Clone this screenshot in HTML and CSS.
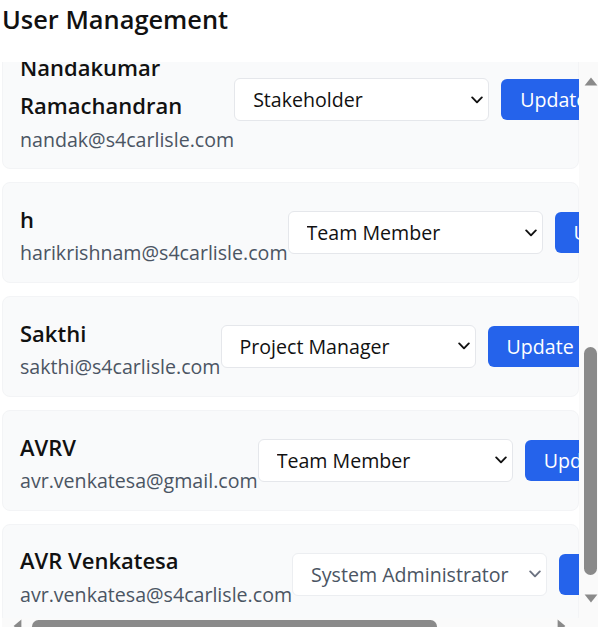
FILE: index.html
```html
<!DOCTYPE html>
<html lang="en">
<head>
<meta charset="utf-8">
<title>User Management</title>
<link rel="stylesheet" href="styles.css">
</head>
<body>
<div class="page">
  <h2 class="title">User Management</h2>
  <div class="panel">
    <div class="list" id="list">
      <div class="card">
        <div class="info"><div class="name">Admin</div><div class="email">admin@s4carlisle.com</div></div>
        <div class="controls"><span class="select-wrap"><select class="role"><option>System Administrator</option></select><svg class="chev" viewBox="0 0 12 8" aria-hidden="true"><path d="M1.2 1.4 L6 6.3 L10.8 1.4"/></svg></span><button class="btn">Update</button></div>
      </div>
      <div class="card">
        <div class="info"><div class="name">Priya S</div><div class="email">priya.s@s4carlisle.com</div></div>
        <div class="controls"><span class="select-wrap"><select class="role"><option>Project Manager</option></select><svg class="chev" viewBox="0 0 12 8" aria-hidden="true"><path d="M1.2 1.4 L6 6.3 L10.8 1.4"/></svg></span><button class="btn">Update</button></div>
      </div>
      <div class="card">
        <div class="info"><div class="name">Karthik</div><div class="email">karthik@s4carlisle.com</div></div>
        <div class="controls"><span class="select-wrap"><select class="role"><option>Team Member</option></select><svg class="chev" viewBox="0 0 12 8" aria-hidden="true"><path d="M1.2 1.4 L6 6.3 L10.8 1.4"/></svg></span><button class="btn">Update</button></div>
      </div>
      <div class="card">
        <div class="info"><div class="name">Lakshmi</div><div class="email">lakshmi@s4carlisle.com</div></div>
        <div class="controls"><span class="select-wrap"><select class="role"><option>Stakeholder</option></select><svg class="chev" viewBox="0 0 12 8" aria-hidden="true"><path d="M1.2 1.4 L6 6.3 L10.8 1.4"/></svg></span><button class="btn">Update</button></div>
      </div>
      <div class="card">
        <div class="info"><div class="name">Nandakumar Ramachandran</div><div class="email">nandak@s4carlisle.com</div></div>
        <div class="controls"><span class="select-wrap"><select class="role"><option>Stakeholder</option></select><svg class="chev" viewBox="0 0 12 8" aria-hidden="true"><path d="M1.2 1.4 L6 6.3 L10.8 1.4"/></svg></span><button class="btn">Update</button></div>
      </div>
      <div class="card" id="anchor">
        <div class="info"><div class="name">h</div><div class="email">harikrishnam@s4carlisle.com</div></div>
        <div class="controls"><span class="select-wrap"><select class="role"><option>Team Member</option></select><svg class="chev" viewBox="0 0 12 8" aria-hidden="true"><path d="M1.2 1.4 L6 6.3 L10.8 1.4"/></svg></span><button class="btn">Update</button></div>
      </div>
      <div class="card">
        <div class="info"><div class="name">Sakthi</div><div class="email">sakthi@s4carlisle.com</div></div>
        <div class="controls"><span class="select-wrap"><select class="role"><option>Project Manager</option></select><svg class="chev" viewBox="0 0 12 8" aria-hidden="true"><path d="M1.2 1.4 L6 6.3 L10.8 1.4"/></svg></span><button class="btn">Update</button></div>
      </div>
      <div class="card">
        <div class="info"><div class="name">AVRV</div><div class="email">avr.venkatesa@gmail.com</div></div>
        <div class="controls"><span class="select-wrap"><select class="role"><option>Team Member</option></select><svg class="chev" viewBox="0 0 12 8" aria-hidden="true"><path d="M1.2 1.4 L6 6.3 L10.8 1.4"/></svg></span><button class="btn">Update</button></div>
      </div>
      <div class="card">
        <div class="info"><div class="name">AVR Venkatesa</div><div class="email">avr.venkatesa@s4carlisle.com</div></div>
        <div class="controls"><span class="select-wrap select-muted"><select class="role"><option>System Administrator</option></select><svg class="chev" viewBox="0 0 12 8" aria-hidden="true"><path d="M1.2 1.4 L6 6.3 L10.8 1.4"/></svg></span><button class="btn">Update</button></div>
      </div>
    </div>
    <div class="vbar" aria-hidden="true">
      <svg class="arrow arrow-up" viewBox="0 0 14 9"><path d="M7 0.6 L13.4 8.4 L0.6 8.4 Z"/></svg>
      <div class="vthumb"></div>
      <svg class="arrow arrow-down" viewBox="0 0 14 9"><path d="M0.6 0.6 L13.4 0.6 L7 8.4 Z"/></svg>
    </div>
    <div class="hbar" aria-hidden="true">
      <svg class="harrow arrow-left" viewBox="0 0 9 14"><path d="M0.6 7 L8.4 0.6 L8.4 13.4 Z"/></svg>
      <div class="hthumb"></div>
      <svg class="harrow arrow-right" viewBox="0 0 9 14"><path d="M8.4 7 L0.6 0.6 L0.6 13.4 Z"/></svg>
    </div>
    <div class="corner" aria-hidden="true"></div>
  </div>
</div>
<script src="script.js"></script>
</body>
</html>
```
FILE: styles.css
```css
html, body {
  margin: 0;
  background: #ffffff;
}
body {
  font-family: "Open Sans", "Noto Sans", sans-serif;
  color: #111827;
}
.page {
  padding: 3px 0 0 2px;
  width: 596px;
}
.title {
  margin: 0 0 27px 0;
  font-size: 25.4px;
  line-height: 32px;
  font-weight: 600;
  color: #111111;
}
.panel {
  position: relative;
  width: 596px;
  height: 571px;
  overflow: hidden;
}
.list {
  width: 577px;
  height: 571px;
  overflow: hidden;
  display: flex;
  flex-direction: column;
  gap: 13px;
  padding-bottom: 30px;
  box-sizing: border-box;
}
.card {
  flex-shrink: 0;
  display: flex;
  align-items: center;
  justify-content: space-between;
  padding: 17.6px 17px;
  border: 1px solid #f3f4f6;
  border-radius: 8px;
  background: #f9fafb;
}
.name {
  font-size: 22px;
  line-height: 37.7px;
  font-weight: 600;
  color: #111111;
}
.email {
  padding-top: 3px;
  font-size: 19.6px;
  line-height: 23px;
  color: #4b5563;
}
.controls {
  flex-shrink: 0;
  display: flex;
  align-items: center;
  gap: 12px;
}
.select-wrap {
  position: relative;
  display: block;
}
.role {
  display: block;
  width: 255px;
  height: 43px;
  padding: 0 24px 0 18px;
  font-family: inherit;
  font-size: 19.6px;
  color: #111111;
  background: #ffffff;
  border: 1px solid #e5e7eb;
  border-radius: 6px;
  appearance: none;
  -webkit-appearance: none;
}
.chev {
  position: absolute;
  right: 6px;
  top: 17.5px;
  width: 12px;
  height: 8px;
  fill: none;
  stroke: #111111;
  stroke-width: 1.9;
  stroke-linecap: round;
  stroke-linejoin: round;
  pointer-events: none;
}
.select-muted .role {
  color: #4b5563;
  border-color: #eceef1;
}
.select-muted .chev {
  stroke: #6b7280;
}
.btn {
  height: 41px;
  padding: 0 19px;
  font-family: inherit;
  font-size: 19.6px;
  font-weight: 500;
  color: #ffffff;
  background: #2563eb;
  border: none;
  border-radius: 6px;
}
.vbar {
  position: absolute;
  left: 577px;
  top: 0;
  width: 19px;
  height: 556px;
  background: #fafafa;
}
.arrow {
  position: absolute;
  left: 4.5px;
  width: 14px;
  height: 9px;
  fill: #8a8a8a;
}
.arrow-up {
  top: 14.5px;
}
.arrow-down {
  top: 531.5px;
}
.vthumb {
  position: absolute;
  left: 4.5px;
  top: 285px;
  width: 13px;
  height: 228px;
  border-radius: 6.5px;
  background: #8a8a8a;
}
.hbar {
  position: absolute;
  left: 0;
  top: 556px;
  width: 577px;
  height: 15px;
  background: #fafafa;
}
.harrow {
  position: absolute;
  top: 1px;
  width: 9px;
  height: 14px;
  fill: #8a8a8a;
}
.arrow-left {
  left: 11.3px;
}
.arrow-right {
  left: 554.7px;
}
.hthumb {
  position: absolute;
  left: 30px;
  top: 1.5px;
  width: 405px;
  height: 13px;
  border-radius: 6.5px;
  background: #8a8a8a;
}
.corner {
  position: absolute;
  left: 577px;
  top: 556px;
  width: 19px;
  height: 15px;
  background: #fafafa;
}
```
FILE: script.js
```js
(function () {
  var list = document.getElementById('list');
  var anchor = document.getElementById('anchor');
  list.scrollTop += anchor.getBoundingClientRect().top - 182;
})();
```
